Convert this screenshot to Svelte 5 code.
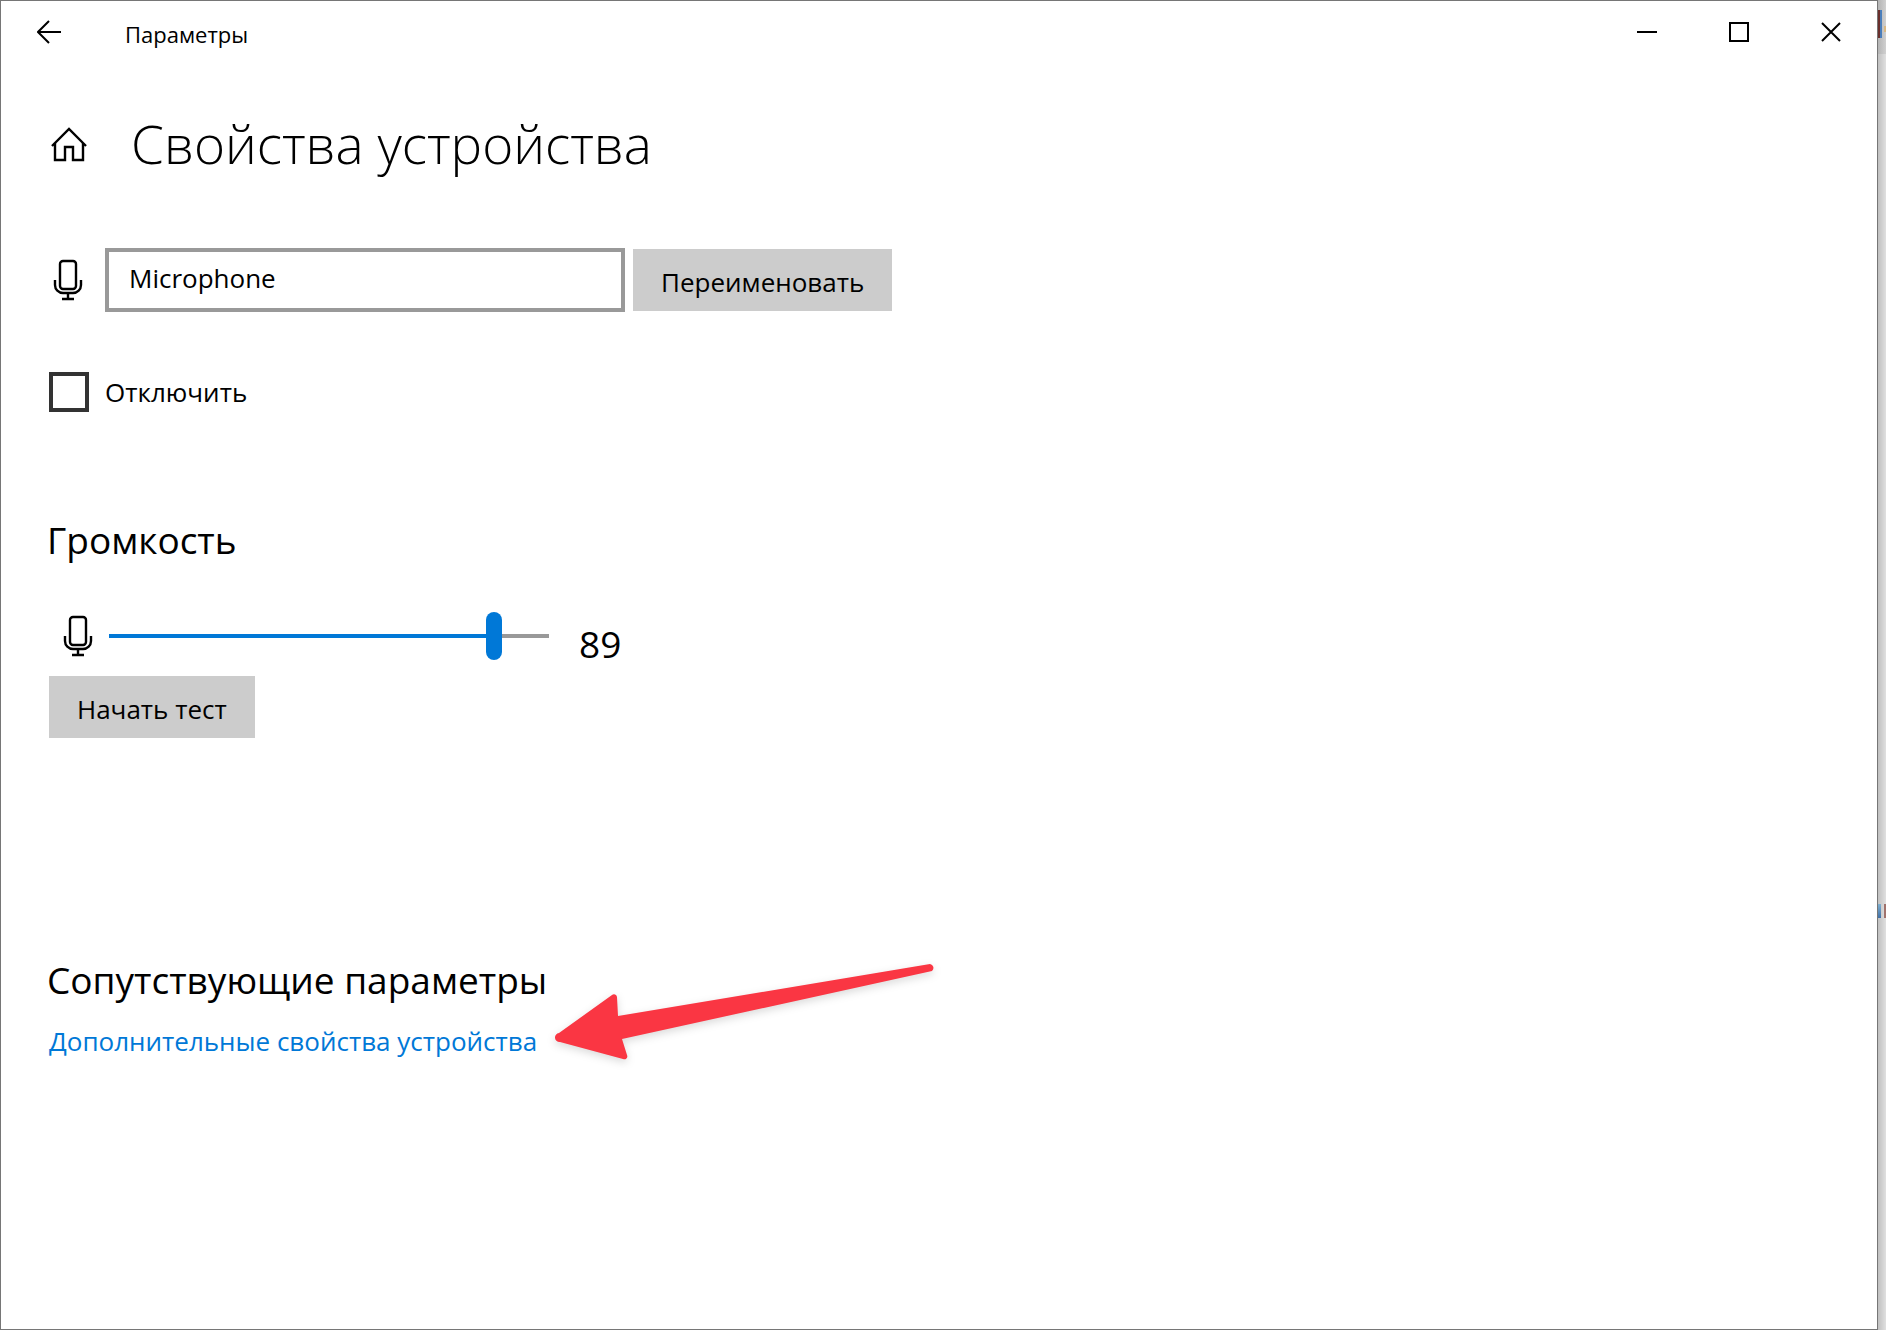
<script>
    let deviceName = $state('Microphone')
    let disabled = $state(false)
    let volume = $state(89)
</script>

{#snippet mic()}
    <svg class="mic" width="28" height="40" viewBox="0 0 28 40" aria-hidden="true">
        <rect x="6" y="1" width="16" height="28" rx="3" />
        <path d="M1 20v5a8 8 0 0 0 8 8h10a8 8 0 0 0 8-8v-5" />
        <path d="M14 33v6M8 39h12" />
    </svg>
{/snippet}

<div class="desktop">
    <div class="window">
        <header class="titlebar">
            <button class="back" aria-label="Назад">
                <svg width="24" height="24" viewBox="0 0 24 24">
                    <path d="M24 12H1M12 1L1 12l11 11" />
                </svg>
            </button>
            <span class="app-name">Параметры</span>
            <button class="control" aria-label="Свернуть">
                <svg width="20" height="20" viewBox="0 0 20 20"><path d="M0 10h20" /></svg>
            </button>
            <button class="control" aria-label="Развернуть">
                <svg width="20" height="20" viewBox="0 0 20 20"><path d="M1 1h18v18H1z" /></svg>
            </button>
            <button class="control" aria-label="Закрыть">
                <svg width="20" height="20" viewBox="0 0 20 20"><path d="M1 1l18 18M19 1L1 19" /></svg>
            </button>
        </header>

        <main>
            <div class="heading">
                <svg class="home" width="36" height="36" viewBox="0 0 36 36" aria-hidden="true">
                    <path d="M1 20L18 3l17 17" />
                    <path d="M4 17v17h10V21h8v13h10V17" />
                </svg>
                <h1>Свойства устройства</h1>
            </div>

            <form class="rename" onsubmit={(e) => e.preventDefault()}>
                {@render mic()}
                <input class="name" type="text" aria-label="Имя устройства" bind:value={deviceName}>
                <button class="btn">Переименовать</button>
            </form>

            <label class="disable">
                <input type="checkbox" bind:checked={disabled}>
                Отключить
            </label>

            <section class="volume">
                <h2>Громкость</h2>
                <div class="level">
                    {@render mic()}
                    <input
                        type="range"
                        min="0"
                        max="100"
                        aria-label="Громкость"
                        style="--level: {volume}%"
                        bind:value={volume}
                    >
                    <output>{volume}</output>
                </div>
                <button class="btn">Начать тест</button>
            </section>

            <section class="related">
                <h2>Сопутствующие параметры</h2>
                <div class="link-row">
                    <a href="#properties">Дополнительные свойства устройства</a>
                    <svg class="arrow" width="384" height="102" viewBox="0 0 384 102" aria-hidden="true">
                        <path d="M3 71L56 33a3 3 0 0 1 5 2l1 19L374 2a4 4 0 0 1 2 7L66 77l5 16a3 3 0 0 1-4 4L4 80a4 4 0 0 1-1-9z" />
                    </svg>
                </div>
            </section>
        </main>
    </div>

    <div class="behind"></div>
</div>

<style>
    :global(body) {
        background: #dedede;
    }

    .desktop {
        display: flex;
        min-height: 100vh;
        font-family: "Open Sans", "Noto Sans", sans-serif;
        font-size: 26px;
        line-height: 40px;
        color: #000;
    }

    .window {
        flex: 1;
        box-sizing: border-box;
        border: 1px solid #767676;
        background: #fff;
    }

    /* sliver of the window underneath */
    .behind {
        width: 8px;
        background:
            linear-gradient(#6b2f2c, #6b2f2c) 0 10px / 2px 28px no-repeat,
            linear-gradient(#4a7ebb, #4a7ebb) 2px 10px / 2px 28px no-repeat,
            linear-gradient(#d9b883, #d9b883) 6px 26px / 2px 6px no-repeat,
            linear-gradient(#7fb0d0, #3f6fa8) 0 904px / 3px 14px no-repeat,
            linear-gradient(#a0726c, #a0726c) 6px 904px / 2px 14px no-repeat,
            linear-gradient(90deg, #b4b4b4, #d0d0d0) 0 0 / 8px 54px no-repeat,
            linear-gradient(90deg, #c0c0c0, #e0e0e0);
    }

    button, input {
        font: inherit;
        color: inherit;
    }

    button {
        border: 0;
        padding: 0;
        background: none;
    }

    svg {
        display: block;
        flex: none;
        fill: none;
        stroke: #000;
        stroke-width: 2;
    }

    .mic, .home {
        overflow: visible;
        stroke-width: 2.4;
    }

    .titlebar {
        display: flex;
        height: 62px;
    }

    .back, .control {
        display: flex;
        align-items: center;
        justify-content: center;
        width: 92px;
    }

    .back {
        width: 96px;
    }

    .app-name {
        flex: 1;
        padding: 13px 28px;
        font-size: 22px;
    }

    main {
        padding: 41px 48px;
    }

    .heading {
        display: flex;
        align-items: center;
        gap: 44px;
        height: 80px;
    }

    .home {
        margin-left: 2px;
    }

    h1, h2 {
        margin: 0;
        font-weight: 400;
    }

    h1 {
        font-size: 53px;
        font-weight: 300;
        line-height: 80px;
    }

    h2 {
        margin-left: -2px;
        font-size: 37px;
        line-height: 56px;
    }

    .rename {
        display: flex;
        align-items: center;
        margin-top: 64px;
    }

    .rename .mic {
        margin: 0 23px 0 5px;
    }

    .name {
        box-sizing: border-box;
        width: 520px;
        height: 64px;
        margin-right: 8px;
        padding: 0 20px 4px;
        border: 4px solid #999;
        border-radius: 0;
        background: #fff;
    }

    .btn {
        height: 62px;
        padding: 4px 28px 0;
        background: #ccc;
    }

    .disable {
        display: flex;
        align-items: center;
        gap: 16px;
        margin-top: 60px;
    }

    .disable input {
        appearance: none;
        box-sizing: border-box;
        width: 40px;
        height: 40px;
        margin: 0;
        border: 4px solid #333;
    }

    .disable input:checked {
        background: #0078d7;
    }

    .volume {
        margin-top: 100px;
    }

    .level {
        display: flex;
        align-items: center;
        height: 64px;
        margin: 36px 0 8px;
    }

    .level .mic {
        margin: 0 17px 0 15px;
    }

    .level input {
        appearance: none;
        width: 440px;
        height: 48px;
        margin: 0 30px 0 0;
        background: linear-gradient(90deg, #0078d7 var(--level), #999 0) center / 100% 4px no-repeat;
    }

    .level input::-webkit-slider-thumb {
        appearance: none;
        width: 16px;
        height: 48px;
        border-radius: 8px;
        background: #0078d7;
    }

    .level output {
        padding-top: 16px;
        font-size: 37px;
    }

    .related {
        margin-top: 214px;
    }

    .link-row {
        position: relative;
        display: flex;
        margin-top: 13px;
    }

    a {
        color: #0078d7;
        text-decoration: none;
    }

    /* pointer drawn over the page, tip at the link */
    .arrow {
        position: absolute;
        left: 507px;
        bottom: -3px;
        overflow: visible;
        fill: #fa3643;
        stroke: none;
        filter: drop-shadow(0 3px 4px rgba(0, 0, 0, 0.15));
    }
</style>
